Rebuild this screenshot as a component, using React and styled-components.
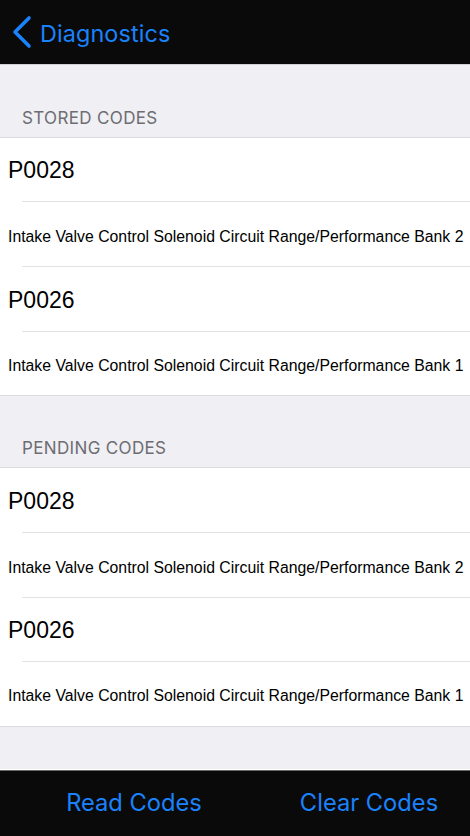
import React from "react";
import styled, { createGlobalStyle } from "styled-components";

const Global = createGlobalStyle`
  html, body { margin: 0; padding: 0; background: #efeff4; }
  body { font-family: "Liberation Sans", Arial, sans-serif; -webkit-font-smoothing: antialiased; }
  * { box-sizing: border-box; }
`;

const BLUE = "#1a82fb";

const Screen = styled.div`
  width: 470px;
  height: 836px;
  display: flex;
  flex-direction: column;
  background: #efeff4;
  overflow: hidden;
`;

const NavBar = styled.header`
  height: 65px;
  flex: none;
  background: #0a0a0a;
  display: flex;
  align-items: center;
  padding-left: 11px;
  gap: 7px;
  border-bottom: 1px solid #d0d0d4;
`;

const NavTitle = styled.span`
  color: ${BLUE};
  font-family: "Inter", "Liberation Sans", sans-serif;
  font-size: 23.4px;
  letter-spacing: 0.1px;
  margin-top: 2px;
`;

const Content = styled.main`
  flex: 1;
  display: flex;
  flex-direction: column;
`;

const SectionHeader = styled.div`
  height: ${(p) => p.$h}px;
  display: flex;
  align-items: flex-end;
  padding: 0 0 9px 22px;
  color: #6d6d72;
  font-family: "Inter", "Liberation Sans", sans-serif;
  font-size: 17px;
  letter-spacing: 0.35px;
  border-bottom: 1px solid #dcdce0;
`;

const List = styled.div`
  background: #fff;
  border-bottom: 1px solid #dcdce0;
`;

const Row = styled.div`
  height: ${(p) => p.$h}px;
  position: relative;
  display: flex;
  align-items: center;
  padding-left: 8px;
  color: #000;
  font-family: "Liberation Sans", Arial, sans-serif;
  font-size: ${(p) => (p.$code ? "23px" : "15.8px")};
  white-space: nowrap;
  ${(p) => (p.$code ? "padding-top: 1px;" : "padding-top: 4px;")}
  &::after {
    content: "";
    display: ${(p) => (p.$last ? "none" : "block")};
    position: absolute;
    left: 22px;
    right: 0;
    bottom: 0;
    height: 1px;
    background: #e2e2e6;
  }
`;

const Spacer = styled.div`
  flex: 1;
  border-bottom: 1px solid #fff;
`;

const TabBar = styled.footer`
  height: 66px;
  flex: none;
  background: #0a0a0a;
  border-top: 1px solid #6a6a6a;
  display: grid;
  grid-template-columns: 1fr 1fr;
  align-items: center;
`;

const TabButton = styled.button`
  background: none;
  border: none;
  color: ${BLUE};
  font-family: "Inter", "Liberation Sans", sans-serif;
  font-size: 23.7px;
  padding: 0 0 2px 33px;
  text-align: center;
  cursor: pointer;
`;

const Chevron = () => (
  <svg width="22" height="34" viewBox="0 0 22 34" style={{ flex: "none" }}>
    <path
      d="M18 3 L4 17 L18 31"
      fill="none"
      stroke={BLUE}
      strokeWidth="3.6"
      strokeLinecap="round"
      strokeLinejoin="round"
    />
  </svg>
);

const sections = [
  {
    title: "STORED CODES",
    h: 73,
    rows: [64, 65, 65, 63],
    items: [
      ["P0028", "Intake Valve Control Solenoid Circuit Range/Performance Bank 2"],
      ["P0026", "Intake Valve Control Solenoid Circuit Range/Performance Bank 1"],
    ],
  },
  {
    title: "PENDING CODES",
    h: 72,
    rows: [65, 65, 64, 64],
    items: [
      ["P0028", "Intake Valve Control Solenoid Circuit Range/Performance Bank 2"],
      ["P0026", "Intake Valve Control Solenoid Circuit Range/Performance Bank 1"],
    ],
  },
];

export default function App() {
  return (
    <>
      <Global />
      <Screen>
        <NavBar>
          <Chevron />
          <NavTitle>Diagnostics</NavTitle>
        </NavBar>
        <Content>
          {sections.map((s) => (
            <React.Fragment key={s.title}>
              <SectionHeader $h={s.h}>{s.title}</SectionHeader>
              <List>
                {s.items.map(([code, desc], i) => (
                  <React.Fragment key={i}>
                    <Row $code $h={s.rows[i * 2]}>{code}</Row>
                    <Row $h={s.rows[i * 2 + 1]} $last={i === s.items.length - 1}>
                      {desc}
                    </Row>
                  </React.Fragment>
                ))}
              </List>
            </React.Fragment>
          ))}
          <Spacer />
        </Content>
        <TabBar>
          <TabButton>Read Codes</TabButton>
          <TabButton>Clear Codes</TabButton>
        </TabBar>
      </Screen>
    </>
  );
}
